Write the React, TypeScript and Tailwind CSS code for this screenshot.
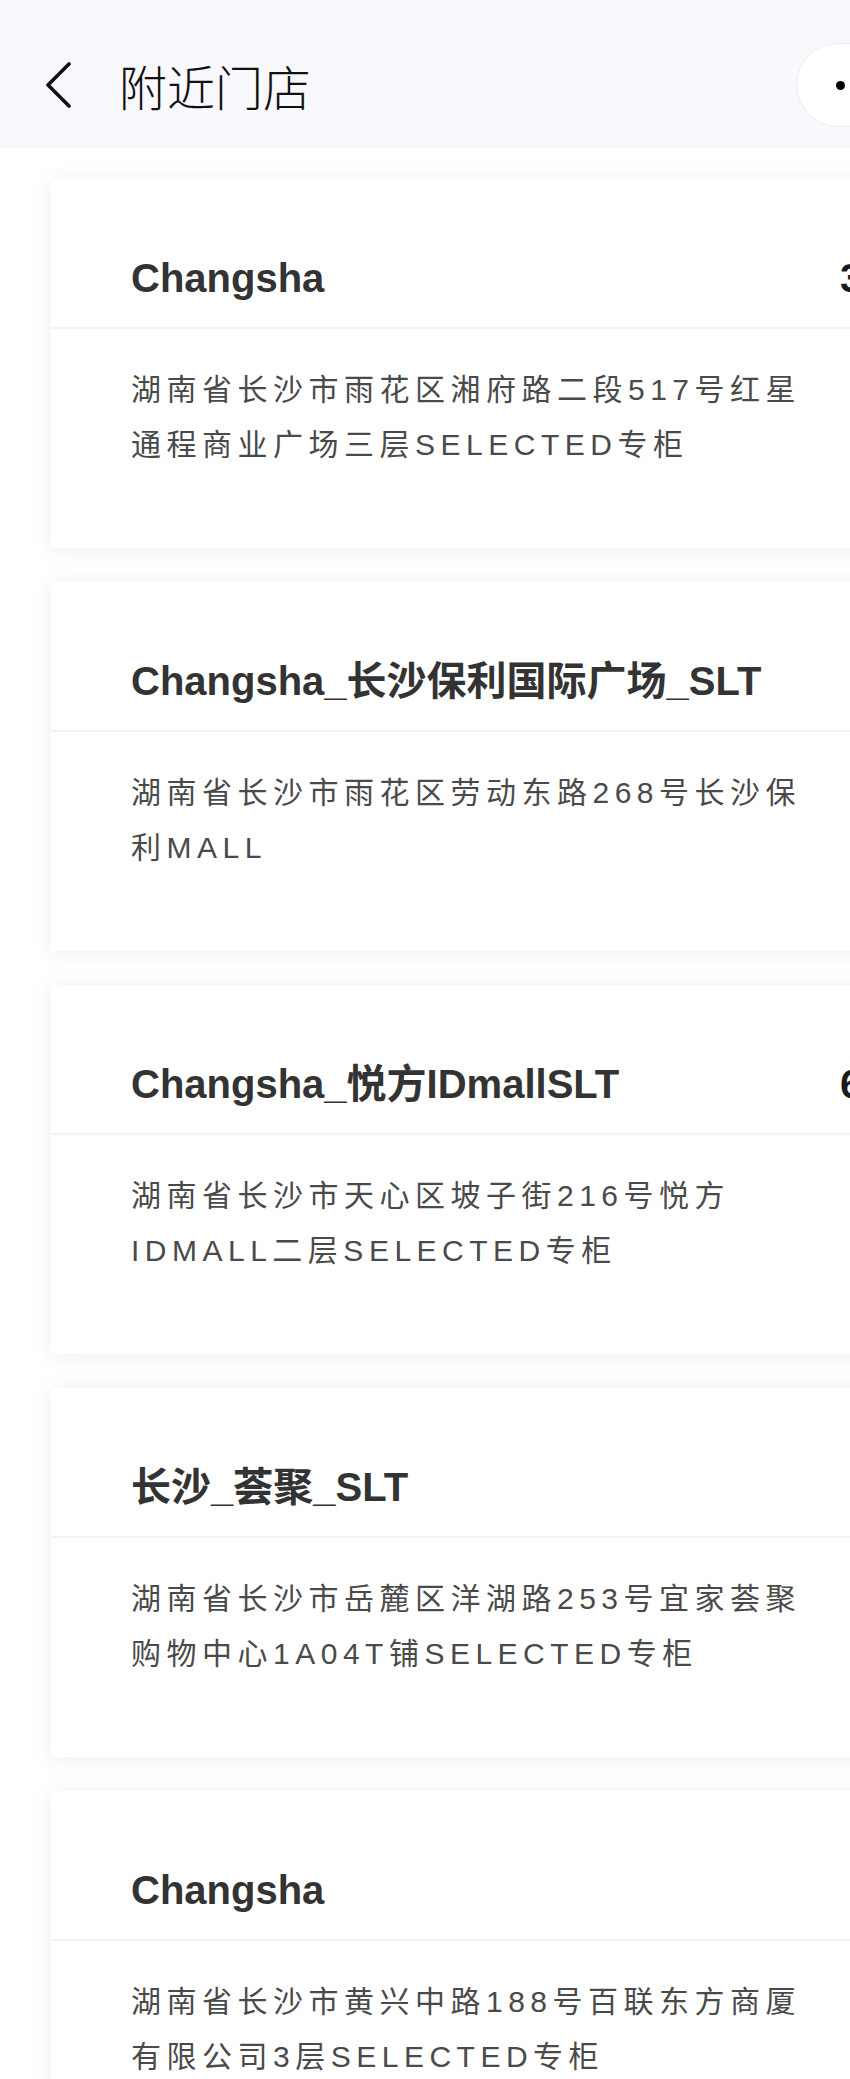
import React from 'react';

type Store = {
  name: string;
  address: string;
  distance?: string;
};

const stores: Store[] = [
  { name: 'Changsha', address: '湖南省长沙市雨花区湘府路二段517号红星通程商业广场三层SELECTED专柜', distance: '3.5km' },
  { name: 'Changsha_长沙保利国际广场_SLT', address: '湖南省长沙市雨花区劳动东路268号长沙保利MALL' },
  { name: 'Changsha_悦方IDmallSLT', address: '湖南省长沙市天心区坡子街216号悦方IDMALL二层SELECTED专柜', distance: '6.2km' },
  { name: '长沙_荟聚_SLT', address: '湖南省长沙市岳麓区洋湖路253号宜家荟聚购物中心1A04T铺SELECTED专柜' },
  { name: 'Changsha', address: '湖南省长沙市黄兴中路188号百联东方商厦有限公司3层SELECTED专柜' },
];

const font = { fontFamily: '"Liberation Sans", "Noto Sans CJK SC", sans-serif' };

function StoreCard({ store }: { store: Store }) {
  return (
    <div className="ml-[51px] w-[900px] shrink-0 bg-white shadow-[0_2px_22px_rgba(0,0,0,0.07)]">
      <div className="flex pl-[80px] pt-[75px] pb-[25px] border-b-2 border-[#f3f3f3]">
        <div className="w-[709px] shrink-0 text-[40px] leading-[48px] font-bold text-[#333333]">{store.name}</div>
        {store.distance && (
          <div className="text-[40px] leading-[48px] font-bold text-[#1a1a1a]">{store.distance}</div>
        )}
      </div>
      <div className="pl-[80px] pt-[33px] pb-[76px]">
        <p className="w-[690px] text-[30px] leading-[55px] tracking-[5.5px] text-[#4a4a4a]">{store.address}</p>
      </div>
    </div>
  );
}

export default function App() {
  return (
    <div className="w-[850px] min-h-[2079px] overflow-hidden bg-white" style={font}>
      <div className="h-[148px] bg-[#f9f8fd] flex items-center pt-[22px]">
        <svg className="ml-[43px] shrink-0" width="30" height="46" viewBox="0 0 30 46" fill="none">
          <path d="M26 2 L5 23 L26 44" stroke="#111" strokeWidth="3.6" strokeLinecap="round" strokeLinejoin="round" />
        </svg>
        <h1
          className="ml-[46px] text-[48px] leading-none font-normal text-[#111111]"
          style={{ fontFamily: '"Noto Sans CJK SC", "Liberation Sans", sans-serif', fontWeight: 300 }}
        >
          附近门店
        </h1>
        <div className="ml-auto mr-[-120px] w-[174px] h-[84px] shrink-0 rounded-full border border-[#ececec] bg-white flex items-center pl-[39px] gap-[12px]">
          <span className="w-[9px] h-[9px] rounded-full bg-black" />
          <span className="w-[14px] h-[14px] rounded-full bg-black" />
          <span className="w-[9px] h-[9px] rounded-full bg-black" />
        </div>
      </div>
      <div className="flex flex-col gap-[34px] pt-[31px] pb-[40px]">
        {stores.map((s, i) => (
          <StoreCard key={i} store={s} />
        ))}
      </div>
    </div>
  );
}
